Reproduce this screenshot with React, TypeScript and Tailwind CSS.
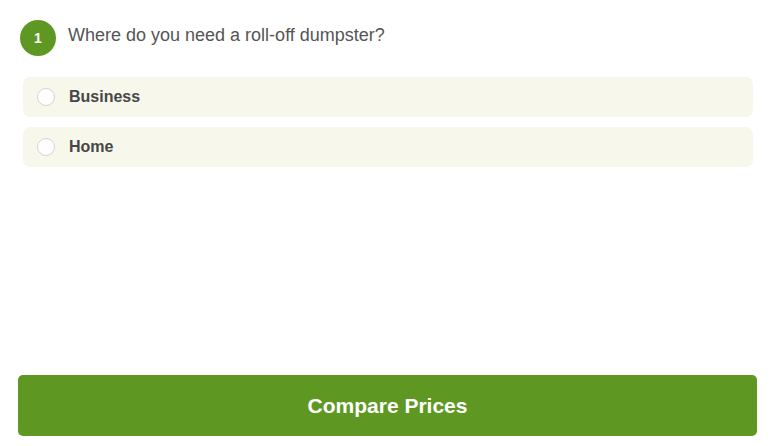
export default function App() {
  const options = ["Business", "Home"];

  return (
    <div
      className="flex h-[446px] w-[776px] flex-col bg-white px-[18px] pb-[10px] pt-[20px]"
      style={{ fontFamily: '"Liberation Sans", Arial, sans-serif' }}
    >
      {/* Question */}
      <div className="flex items-center gap-3 pl-[2px]">
        <div className="flex h-9 w-9 shrink-0 items-center justify-center rounded-full bg-[#5e9823] text-[14px] font-bold text-white">
          1
        </div>
        <p className="-mt-[5px] text-[18px] text-[#555555]">
          Where do you need a roll-off dumpster?
        </p>
      </div>

      {/* Options */}
      <div className="mt-[21px] flex flex-col gap-[10px] px-[5px]">
        {options.map((opt) => (
          <label
            key={opt}
            className="flex h-10 cursor-pointer items-center rounded-[7px] bg-[#f7f7ec] pl-[14px]"
          >
            <span className="h-[18px] w-[18px] rounded-full border border-[#d4d4d4] bg-white" />
            <span className="ml-[14px] text-[16px] font-bold text-[#474747]">{opt}</span>
          </label>
        ))}
      </div>

      <div className="flex-1" />

      <button className="h-[61px] w-[739px] rounded-[5px] bg-[#5e9823] text-[21px] font-bold text-white">
        Compare Prices
      </button>
    </div>
  );
}
